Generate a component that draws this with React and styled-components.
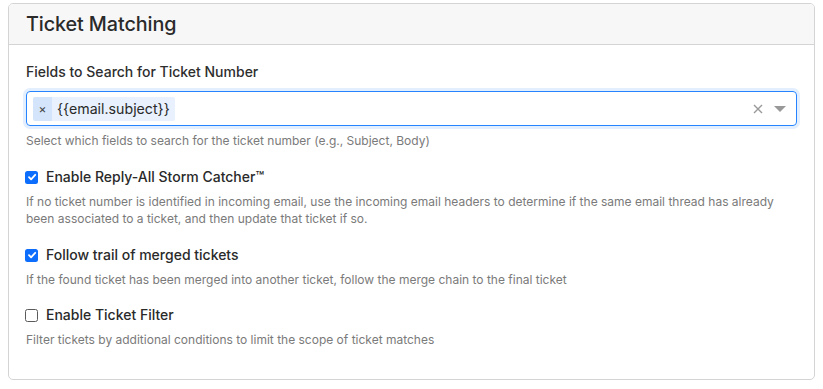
import React from "react";
import styled, { createGlobalStyle } from "styled-components";

const Global = createGlobalStyle`
  html, body { margin: 0; padding: 0; background: #fff; }
  body { font-family: Inter, "Noto Sans", sans-serif; color: #212529; }
`;

const Page = styled.div`
  padding: 3px 8px 0 8px;
`;

const Card = styled.section`
  border: 1px solid #d4d4d4;
  border-radius: 5px;
  height: 377px;
  box-sizing: border-box;
  overflow: hidden;
`;

const Header = styled.header`
  background: #f7f7f7;
  border-bottom: 1px solid #d4d4d4;
  height: 41px;
  box-sizing: border-box;
  padding: 0 17px;
  display: flex;
  align-items: center;
`;

const Title = styled.h2`
  margin: 0;
  font-size: 19.8px;
  font-weight: 500;
  color: #2a2a2a;
  letter-spacing: -0.1px;
`;

const Body = styled.div`
  padding: 17px 17px 0 17px;
  display: flex;
  flex-direction: column;
`;

const Label = styled.div`
  font-size: 14px;
  font-weight: 500;
  color: #2e2e2e;
  line-height: 20px;
  margin-bottom: 9px;
`;

const Select = styled.div`
  height: 35px;
  box-sizing: border-box;
  border: 1px solid #2684ff;
  border-radius: 4px;
  box-shadow: 0 0 0 3px #e3efff;
  display: flex;
  align-items: center;
  padding: 0 6px;
`;

const Values = styled.div`
  flex: 1;
  display: flex;
  align-items: center;
`;

const Tag = styled.div`
  display: flex;
  height: 24px;
  border-radius: 2px;
  overflow: hidden;
  font-size: 14.2px;
  color: #2a2a2a;
`;

const TagRemove = styled.span`
  background: #d3e4fb;
  width: 19px;
  display: flex;
  align-items: center;
  justify-content: center;
  font-size: 12px;
  color: #444;
`;

const TagText = styled.span`
  background: #e8f1fd;
  padding: 0 5px 0 5px;
  display: flex;
  align-items: center;
`;

const Indicators = styled.div`
  display: flex;
  align-items: center;
  gap: 10px;
  padding-right: 4px;
  color: #999;
`;

const Help = styled.div`
  font-size: 12px;
  color: #7a7a7a;
  line-height: 17px;
  margin-top: ${(p) => p.$mt || 0}px;
`;

const CheckRow = styled.label`
  display: flex;
  align-items: center;
  gap: 8px;
  margin-top: ${(p) => p.$mt}px;
  margin-bottom: 6px;
  font-size: 14px;
  font-weight: 500;
  color: #2a2a2a;
  line-height: 20px;
`;

const Box = styled.span`
  width: 13px;
  height: 13px;
  box-sizing: border-box;
  border-radius: 2.5px;
  margin-left: -1px;
  display: flex;
  align-items: center;
  justify-content: center;
  background: ${(p) => (p.$on ? "#0d6efd" : "#fff")};
  border: ${(p) => (p.$on ? "none" : "1px solid #5a5a5a")};
`;

const Check = ({ on }) => (
  <Box $on={on}>
    {on && (
      <svg width="10" height="10" viewBox="0 0 10 10">
        <path d="M2 5.2 L4.1 7.3 L8.2 2.8" fill="none" stroke="#fff" strokeWidth="1.8" strokeLinecap="round" strokeLinejoin="round" />
      </svg>
    )}
  </Box>
);

export default function App() {
  return (
    <>
      <Global />
      <Page>
        <Card>
          <Header>
            <Title>Ticket Matching</Title>
          </Header>
          <Body>
            <Label>Fields to Search for Ticket Number</Label>
            <Select>
              <Values>
                <Tag>
                  <TagRemove>×</TagRemove>
                  <TagText>{"{{email.subject}}"}</TagText>
                </Tag>
              </Values>
              <Indicators>
                <svg width="12" height="12" viewBox="0 0 12 12">
                  <path d="M2 2 L10 10 M10 2 L2 10" stroke="#999" strokeWidth="1.4" />
                </svg>
                <svg width="12" height="8" viewBox="0 0 12 8">
                  <path d="M0 1 L12 1 L6 7 Z" fill="#999" />
                </svg>
              </Indicators>
            </Select>
            <Help $mt={6}>Select which fields to search for the ticket number (e.g., Subject, Body)</Help>

            <CheckRow $mt={18}>
              <Check on />
              Enable Reply-All Storm Catcher™
            </CheckRow>
            <Help>
              If no ticket number is identified in incoming email, use the incoming email headers to determine if the same email thread has already
              <br />
              been associated to a ticket, and then update that ticket if so.
            </Help>

            <CheckRow $mt={18}>
              <Check on />
              Follow trail of merged tickets
            </CheckRow>
            <Help>If the found ticket has been merged into another ticket, follow the merge chain to the final ticket</Help>

            <CheckRow $mt={17}>
              <Check />
              Enable Ticket Filter
            </CheckRow>
            <Help>Filter tickets by additional conditions to limit the scope of ticket matches</Help>
          </Body>
        </Card>
      </Page>
    </>
  );
}
